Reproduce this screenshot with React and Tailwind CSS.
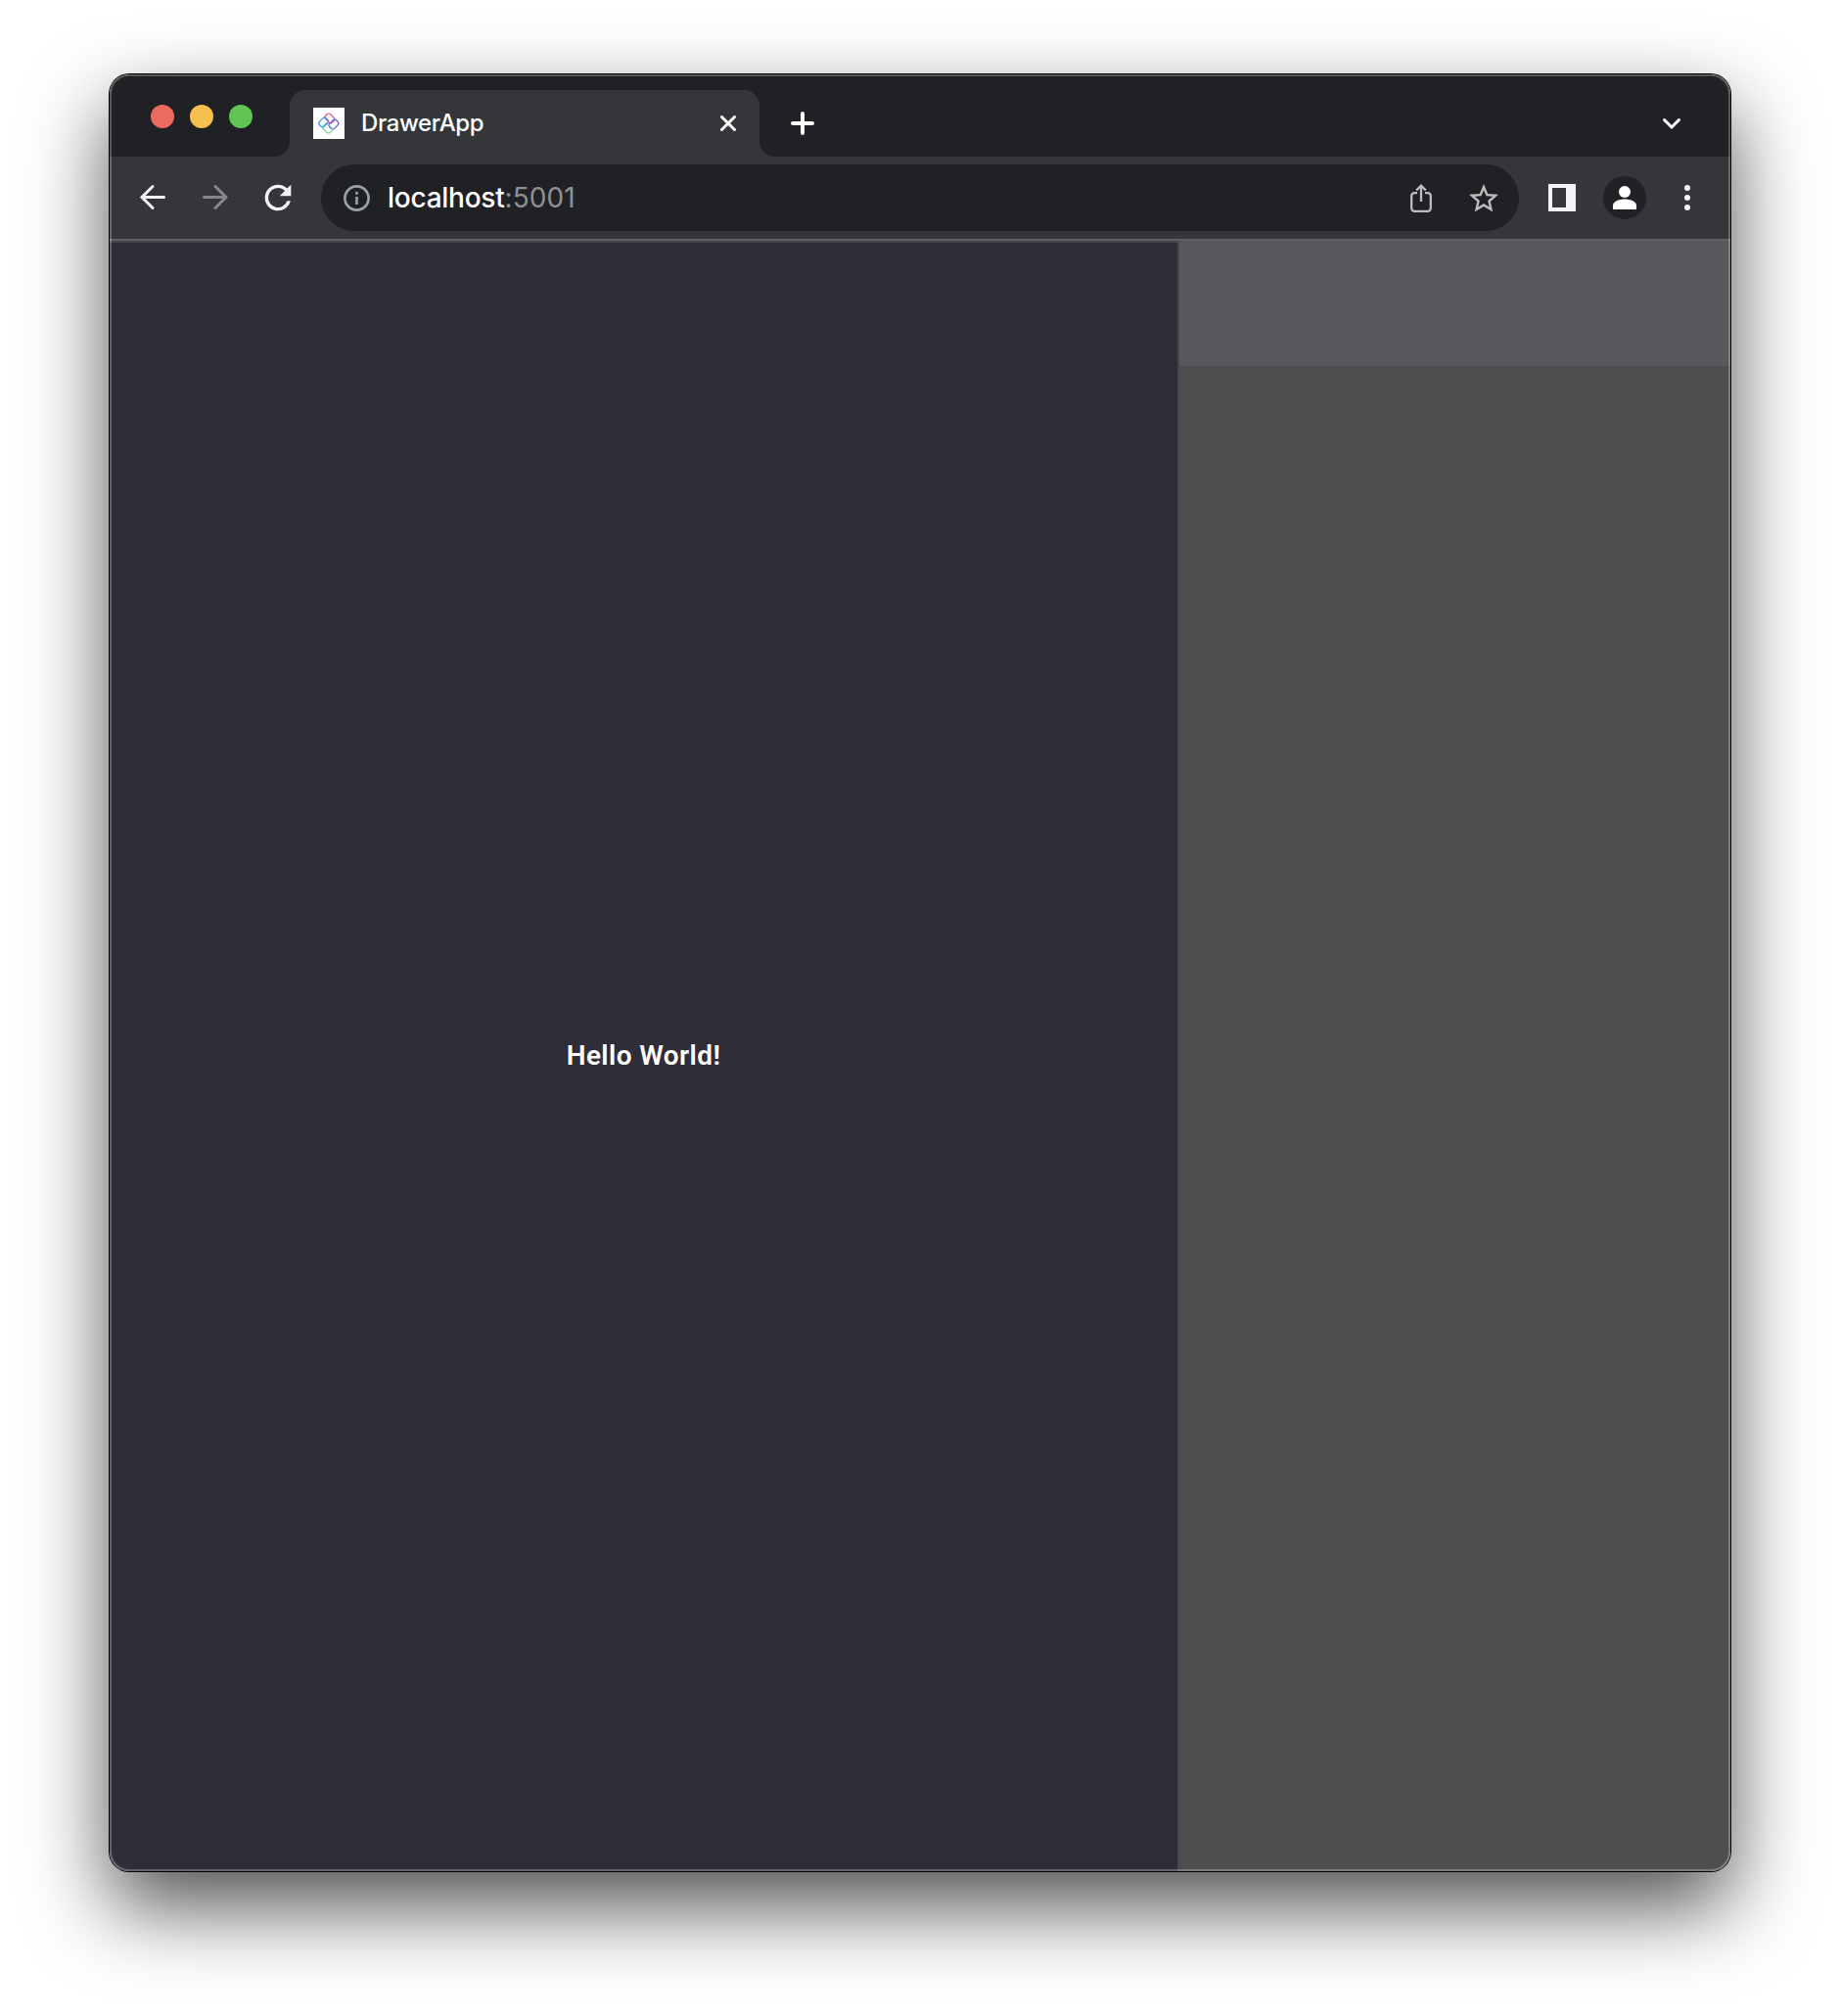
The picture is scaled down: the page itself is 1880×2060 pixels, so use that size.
const star =
  'M22 9.24l-7.19-.62L12 2 9.19 8.63 2 9.24l5.46 4.73L5.82 21 12 17.27 18.18 21l-1.63-7.03L22 9.24zM12 15.4l-3.76 2.27 1-4.28-3.32-2.88 4.38-.38L12 6.1l1.71 4.04 4.38.38-3.32 2.88 1 4.28L12 15.4z';
const reload =
  'M17.65 6.35A7.95 7.95 0 0 0 12 4a8 8 0 1 0 7.73 10h-2.08A6 6 0 1 1 12 6c1.66 0 3.14.69 4.22 1.78L13 11h7V4z';

function Favicon() {
  return (
    <svg className="size-8 shrink-0 bg-white" viewBox="0 0 32 32" fill="none" strokeWidth="1.3">
      <g transform="rotate(45 15.8 16)">
        <rect x="8" y="8.200" width="9.800" height="6.800" rx="2.600" stroke="#e35d6e" />
        <rect x="16.800" y="8.200" width="6.800" height="9.800" rx="2.600" stroke="#6a5be2" />
        <rect x="13.800" y="17" width="9.800" height="6.800" rx="2.600" stroke="#7fd8a4" />
        <rect x="8" y="14" width="6.800" height="9.800" rx="2.600" stroke="#3f97ee" />
      </g>
    </svg>
  );
}

function TabStrip() {
  return (
    <div className="flex h-[84px] items-end bg-[#202124]">
      <div className="flex h-[84px] w-[168px] items-center gap-4 pt-0.5 pl-[42px]">
        <span className="size-6 rounded-full bg-[#ed6a5e]" />
        <span className="size-6 rounded-full bg-[#f5bf4f]" />
        <span className="size-6 rounded-full bg-[#61c554]" />
      </div>
      <div className="size-4 bg-[radial-gradient(circle_at_0_0,#202124_15.500px,#35363a_16.500px)]" />
      <div className="flex h-[68px] w-[480px] items-center rounded-t-2xl bg-[#35363a] px-6">
        <Favicon />
        <span className="ml-[17px] text-[24px] leading-8 font-[450] tracking-[-0.4px] text-white">DrawerApp</span>
        <svg className="ml-auto size-4" viewBox="0 0 16 16" stroke="#fff" strokeWidth="3" strokeLinecap="round">
          <path d="M1.500 1.500l13 13M14.500 1.500l-13 13" />
        </svg>
      </div>
      <div className="size-4 bg-[radial-gradient(circle_at_100%_0,#202124_15.500px,#35363a_16.500px)]" />
      <div className="flex h-[68px] flex-1 items-center justify-between pr-[51px] pl-4">
        <svg className="size-6" viewBox="0 0 24 24" stroke="#fff" strokeWidth="4" strokeLinecap="round">
          <path d="M12 2v20M2 12h20" />
        </svg>
        <svg className="mt-0.5 h-3 w-[18px]" viewBox="0 0 18 12" fill="none" stroke="#fff" strokeWidth="3" strokeLinecap="round">
          <path d="M1.500 1.500L9 9l7.500-7.500" />
        </svg>
      </div>
    </div>
  );
}

function Toolbar() {
  return (
    <div className="flex h-[84px] items-center bg-[#35363a]">
      <svg className="ml-7 h-8 w-8" viewBox="0 0 32 32" fill="none" stroke="#f1f3f4" strokeWidth="3" strokeLinecap="round">
        <path d="M27.500 15.500H5M16 4.500l-11 11 11 11" />
      </svg>
      <svg className="ml-8 h-8 w-8" viewBox="0 0 32 32" fill="none" stroke="#86878a" strokeWidth="3" strokeLinecap="round">
        <path d="M4.500 15.500h22.500M16 4.500l11 11-11 11" />
      </svg>
      <svg className="ml-7 size-10" viewBox="0 0 24 24" fill="#f1f3f4">
        <path d={reload} />
      </svg>
      <div className="ml-6 flex h-[68px] w-[1224px] items-center rounded-full bg-[#202124] pr-[18px] pl-[23px]">
        <svg className="size-[27px]" viewBox="0 0 27 27" fill="none" stroke="#9aa0a6" strokeWidth="2.700">
          <circle cx="13.500" cy="13.500" r="12.100" />
          <path d="M13.500 12v8M13.500 7v2.800" />
        </svg>
        <span className="ml-[18px] text-[28px] leading-8 font-[450] tracking-[-0.25px] text-white">
          localhost<span className="font-normal tracking-[0.1px] text-[#8f9092]">:5001</span>
        </span>
        <svg className="ml-auto h-[30px] w-[22px]" viewBox="0 0 22 30" fill="none" stroke="#bdbdbe" strokeWidth="2.300">
          <path d="M7 10.200H4.200a3 3 0 0 0-3 3v12.600a3 3 0 0 0 3 3h13.600a3 3 0 0 0 3-3V13.200a3 3 0 0 0-3-3H15M11 19V3M6.200 7.500L11 2.700l4.800 4.800" />
        </svg>
        <svg className="mt-px ml-[35px] size-9" viewBox="0 0 24 24" fill="#bdbdbe">
          <path d={star} />
        </svg>
      </div>
      <div className="ml-[30px] size-7 border-4 border-r-10 border-[#f1f3f4]" />
      <svg className="ml-7 size-11 rounded-full bg-[#202124]" viewBox="0 0 44 44" fill="#fff">
        <circle cx="22" cy="16" r="6" />
        <path d="M10 34v-4c0-4.500 7-6.500 12-6.500s12 2 12 6.500v4z" />
      </svg>
      <div className="ml-[39px] flex flex-col gap-1">
        <span className="size-1.5 rounded-full bg-[#f1f3f4]" />
        <span className="size-1.5 rounded-full bg-[#f1f3f4]" />
        <span className="size-1.5 rounded-full bg-[#f1f3f4]" />
      </div>
    </div>
  );
}

export default function App() {
  return (
    <div className="h-[2060px] w-[1880px] overflow-hidden bg-white px-28 pt-[76px] font-['Inter',sans-serif]">
      <div className="relative flex h-[1836px] flex-col rounded-[20px] shadow-[0_0_0_1px_#000,0_36px_84px_rgba(0,0,0,0.69)]">
        <div className="flex flex-1 flex-col overflow-hidden rounded-[20px]">
          <TabStrip />
          <Toolbar />
          <div className="h-0.5 bg-[#5f6064]" />
          <div className="flex flex-1">
            <main className="flex w-[1093px] items-center justify-center border-t-2 border-r-2 border-[#464549] bg-[#2f2d37]">
              <p className="mt-[-2px] font-['Roboto',sans-serif] text-[28px] leading-8 font-semibold tracking-[0.4px] text-white">
                Hello World!
              </p>
            </main>
            <aside className="flex-1 bg-[#4e4e4f]">
              <div className="h-32 bg-[#58575b]" />
            </aside>
          </div>
        </div>
        <div className="pointer-events-none absolute inset-0 rounded-[20px] border-2 border-white/25" />
      </div>
    </div>
  );
}
